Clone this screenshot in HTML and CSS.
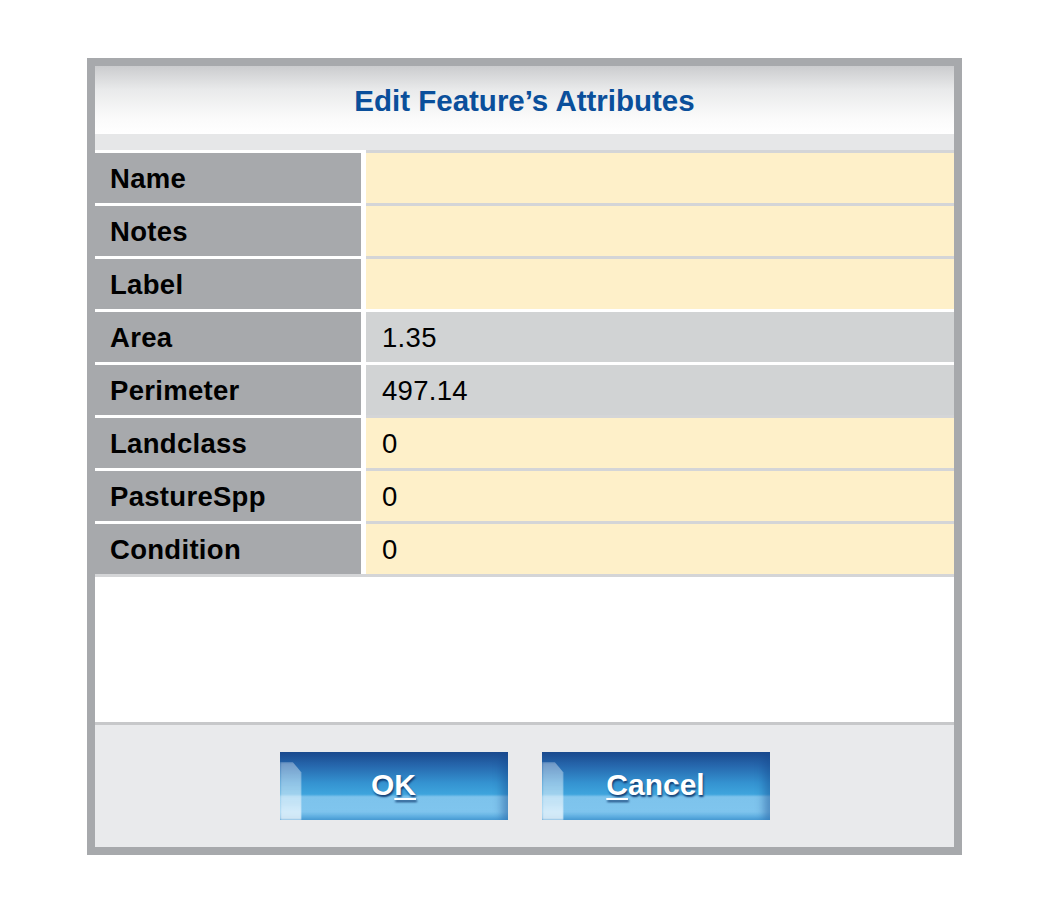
FILE: index.html
```html
<!DOCTYPE html>
<html lang="en">
<head>
    <meta charset="UTF-8">
    <meta name="viewport" content="width=device-width, initial-scale=1.0">
    <title>Edit Feature's Attributes</title>
    <link rel="stylesheet" href="styles.css">
</head>
<body>
    <div class="dialog">
        <div class="dialog-header">
            <h1>Edit Feature’s Attributes</h1>
        </div>
        <div class="band"></div>

        <div class="attr-table">
            <div class="attr-row">
                <div class="attr-name">Name</div>
                <div class="attr-value"></div>
            </div>
            <div class="attr-row">
                <div class="attr-name">Notes</div>
                <div class="attr-value"></div>
            </div>
            <div class="attr-row">
                <div class="attr-name">Label</div>
                <div class="attr-value"></div>
            </div>
            <div class="attr-row readonly">
                <div class="attr-name">Area</div>
                <div class="attr-value">1.35</div>
            </div>
            <div class="attr-row readonly">
                <div class="attr-name">Perimeter</div>
                <div class="attr-value">497.14</div>
            </div>
            <div class="attr-row">
                <div class="attr-name">Landclass</div>
                <div class="attr-value">0</div>
            </div>
            <div class="attr-row">
                <div class="attr-name">PastureSpp</div>
                <div class="attr-value">0</div>
            </div>
            <div class="attr-row">
                <div class="attr-name">Condition</div>
                <div class="attr-value">0</div>
            </div>
        </div>

        <div class="empty-area"></div>

        <div class="dialog-footer">
            <button class="btn">O<u>K</u></button>
            <button class="btn"><u>C</u>ancel</button>
        </div>
    </div>
</body>
</html>
```

FILE: styles.css
```css
body {
    margin: 0;
    background: white;
    font-family: "Liberation Sans", Arial, sans-serif;
}

.dialog {
    width: 859px;
    margin: 58px 0 0 87px;
    border: 8px solid #a7a9ac;
    background: white;
}

.dialog-header {
    height: 68px;
    display: flex;
    align-items: center;
    justify-content: center;
    background: linear-gradient(to bottom, #cbccce 0%, #e9eaeb 35%, #fafafa 75%, #ffffff 100%);
}

h1 {
    margin: 0;
    padding-top: 1px;
    font-size: 29.5px;
    font-weight: bold;
    color: #0a4f9b;
}

.band {
    height: 16px;
    background: #e6e7e8;
}

.attr-row {
    display: grid;
    grid-template-columns: 266px 588px;
    column-gap: 5px;
    height: 53px;
}

.attr-name,
.attr-value {
    display: flex;
    align-items: center;
    font-size: 27.5px;
    letter-spacing: 0.3px;
    color: #000;
}

.attr-name {
    padding-left: 15px;
    padding-top: 1px;
    border-top: 3px solid white;
    background: #a7a9ac;
    font-weight: bold;
}

.attr-value {
    padding-left: 16px;
    padding-top: 1px;
    border-top: 3px solid #d4d5d7;
    background: #fef0c9;
}

.readonly .attr-value {
    border-top-color: white;
    background: #d1d3d4;
}

.attr-table {
    border-bottom: 3px solid #d4d5d7;
}

.empty-area {
    height: 145px;
    border-bottom: 3px solid #c7c8ca;
}

.dialog-footer {
    height: 122px;
    display: flex;
    align-items: center;
    justify-content: center;
    gap: 34px;
    background: #e9eaec;
}

.btn {
    position: relative;
    width: 228px;
    height: 68px;
    padding: 0 0 2px 0;
    border: none;
    overflow: hidden;
    font-family: "Liberation Sans", Arial, sans-serif;
    font-size: 30px;
    font-weight: bold;
    color: white;
    text-shadow: 1px 2px 2px #123d73;
    background: linear-gradient(to bottom, #1c4b8f 0%, #2667ad 20%, #3492d0 45%, #3ea4dd 62%, #7dc3ec 66%, #7fc5ee 88%, #55b0e6 100%);
    box-shadow: inset -6px 0 8px rgba(22, 70, 140, 0.45);
    cursor: pointer;
}

.btn u {
    text-decoration-thickness: 2px;
    text-underline-offset: 3px;
}

/* glassy highlight on the left edge */
.btn::before {
    content: "";
    position: absolute;
    left: 0;
    top: 10px;
    bottom: 0;
    width: 22px;
    background: linear-gradient(to bottom, rgba(255, 255, 255, 0.35), rgba(255, 255, 255, 0.55) 70%, rgba(255, 255, 255, 0.75));
    clip-path: polygon(0 0, 60% 0, 100% 18%, 100% 100%, 0 100%);
    filter: blur(1px);
}
```
